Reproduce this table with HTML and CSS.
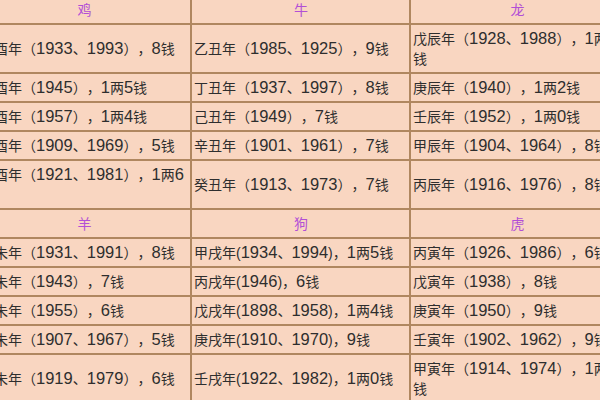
FILE: index.html
```html
<!DOCTYPE html>
<html lang="zh">
<head>
<meta charset="utf-8">
<link rel="stylesheet" href="styles.css">
</head>
<body>
<div class="frame">
<table class="weights">
<colgroup><col class="c1"><col class="c2"><col class="c3"></colgroup>
<tr class="head"><td>鸡</td><td>牛</td><td>龙</td></tr>
<tr><td>癸酉年（<span class="n">1933</span>、<span class="n">1993</span>），<span class="n">8</span>钱</td><td>乙丑年（<span class="n">1985</span>、<span class="n">1925</span>），<span class="n">9</span>钱</td><td>戊辰年（<span class="n">1928</span>、<span class="n">1988</span>），<span class="n">1</span>两<span class="n">2</span><br>钱</td></tr>
<tr><td>乙酉年（<span class="n">1945</span>），<span class="n">1</span>两<span class="n">5</span>钱</td><td>丁丑年（<span class="n">1937</span>、<span class="n">1997</span>），<span class="n">8</span>钱</td><td>庚辰年（<span class="n">1940</span>），<span class="n">1</span>两<span class="n">2</span>钱</td></tr>
<tr><td>丁酉年（<span class="n">1957</span>），<span class="n">1</span>两<span class="n">4</span>钱</td><td>己丑年（<span class="n">1949</span>），<span class="n">7</span>钱</td><td>壬辰年（<span class="n">1952</span>），<span class="n">1</span>两<span class="n">0</span>钱</td></tr>
<tr><td>己酉年（<span class="n">1909</span>、<span class="n">1969</span>），<span class="n">5</span>钱</td><td>辛丑年（<span class="n">1901</span>、<span class="n">1961</span>），<span class="n">7</span>钱</td><td>甲辰年（<span class="n">1904</span>、<span class="n">1964</span>），<span class="n">8</span>钱</td></tr>
<tr><td>辛酉年（<span class="n">1921</span>、<span class="n">1981</span>），<span class="n">1</span>两<span class="n">6</span><br>钱</td><td>癸丑年（<span class="n">1913</span>、<span class="n">1973</span>），<span class="n">7</span>钱</td><td>丙辰年（<span class="n">1916</span>、<span class="n">1976</span>），<span class="n">8</span>钱</td></tr>
<tr class="head"><td>羊</td><td>狗</td><td>虎</td></tr>
<tr><td>辛未年（<span class="n">1931</span>、<span class="n">1991</span>），<span class="n">8</span>钱</td><td>甲戌年(<span class="n">1934</span>、<span class="n">1994</span>)，<span class="n">1</span>两<span class="n">5</span>钱</td><td>丙寅年（<span class="n">1926</span>、<span class="n">1986</span>），<span class="n">6</span>钱</td></tr>
<tr><td>癸未年（<span class="n">1943</span>），<span class="n">7</span>钱</td><td>丙戌年(<span class="n">1946</span>)，<span class="n">6</span>钱</td><td>戊寅年（<span class="n">1938</span>），<span class="n">8</span>钱</td></tr>
<tr><td>乙未年（<span class="n">1955</span>），<span class="n">6</span>钱</td><td>戊戌年(<span class="n">1898</span>、<span class="n">1958</span>)，<span class="n">1</span>两<span class="n">4</span>钱</td><td>庚寅年（<span class="n">1950</span>），<span class="n">9</span>钱</td></tr>
<tr><td>丁未年（<span class="n">1907</span>、<span class="n">1967</span>），<span class="n">5</span>钱</td><td>庚戌年(<span class="n">1910</span>、<span class="n">1970</span>)，<span class="n">9</span>钱</td><td>壬寅年（<span class="n">1902</span>、<span class="n">1962</span>），<span class="n">9</span>钱</td></tr>
<tr><td>己未年（<span class="n">1919</span>、<span class="n">1979</span>），<span class="n">6</span>钱</td><td>壬戌年(<span class="n">1922</span>、<span class="n">1982</span>)，<span class="n">1</span>两<span class="n">0</span>钱</td><td>甲寅年（<span class="n">1914</span>、<span class="n">1974</span>），<span class="n">1</span>两<span class="n">2</span><br>钱</td></tr>
</table>
</div>
</body>
</html>
```
FILE: styles.css
```css
html, body {
  margin: 0;
  padding: 0;
  background: #f9d6c1;
}
.frame {
  width: 600px;
  height: 400px;
  overflow: hidden;
}
.weights {
  margin: -5px 0 0 -23px;
  border-collapse: separate;
  border-spacing: 0;
  table-layout: fixed;
  width: 647px;
  font-family: "Liberation Sans", "Noto Sans CJK SC", sans-serif;
  font-size: 14px;
  line-height: 20px;
  color: #2e2e2e;
  text-spacing-trim: space-all;
}
.c1 { width: 214px; }
.c2 { width: 219px; }
.c3 { width: 214px; }
.weights td {
  border: 1px solid #b08760;
  padding: 4px 1px 3px 2px;
  white-space: nowrap;
  overflow: hidden;
  vertical-align: middle;
  text-align: left;
}
.weights .n {
  font-size: 16.5px;
  line-height: 0;
}
.weights .head td {
  text-align: center;
  color: #b24fd6;
}
```
